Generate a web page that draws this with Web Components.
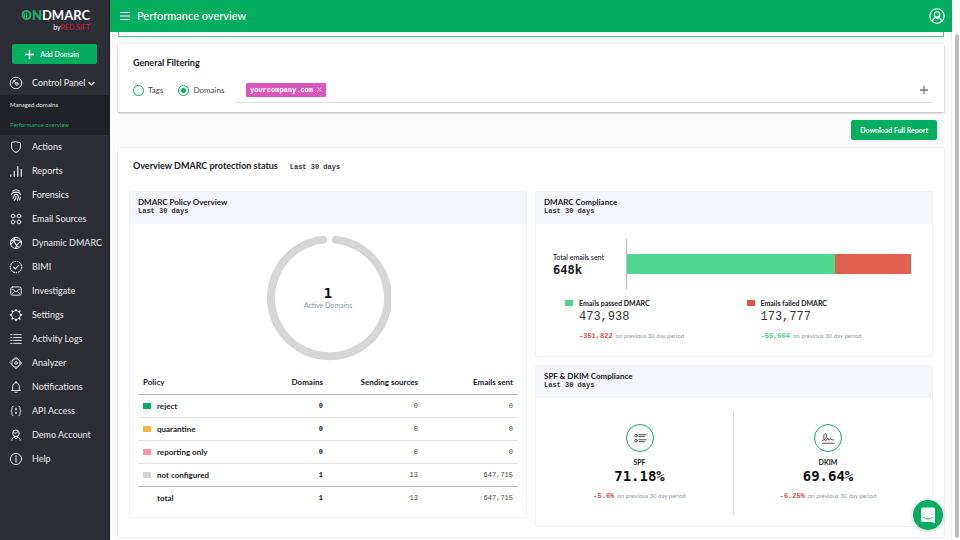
<!DOCTYPE html>
<html lang="en">
<head>
<meta charset="utf-8">
<meta name="viewport" content="width=device-width, initial-scale=1">
<title>OnDMARC – Performance overview</title>
<style>
:root {
  --green: #05ad60;
  --ink: #17181c;
  --panel-head: #f3f5fa;
  --line: #f0f1f4;
  --mono: "Liberation Mono", "Courier New", monospace;
  --mono-strong: "DejaVu Sans Mono", "Liberation Mono", monospace;
}
html, body { height: 100%; margin: 0; }
body { font-family: Lato, "Open Sans", sans-serif; font-size: 8px; line-height: 12px; color: var(--ink); background: #fafafa; overflow: hidden; }
</style>
</head>
<body>
<od-app>
  <od-sidebar slot="side">
    <od-nav-item icon="gauge" expandable>Control Panel</od-nav-item>
    <od-subnav>
      <od-subnav-item>Managed domains</od-subnav-item>
      <od-subnav-item current>Performance overview</od-subnav-item>
    </od-subnav>
    <od-nav-item icon="shield">Actions</od-nav-item>
    <od-nav-item icon="bars">Reports</od-nav-item>
    <od-nav-item icon="print">Forensics</od-nav-item>
    <od-nav-item icon="dots">Email Sources</od-nav-item>
    <od-nav-item icon="aperture">Dynamic DMARC</od-nav-item>
    <od-nav-item icon="badge">BIMI</od-nav-item>
    <od-nav-item icon="mail">Investigate</od-nav-item>
    <od-nav-item icon="gear">Settings</od-nav-item>
    <od-nav-item icon="list">Activity Logs</od-nav-item>
    <od-nav-item icon="target">Analyzer</od-nav-item>
    <od-nav-item icon="bell">Notifications</od-nav-item>
    <od-nav-item icon="braces">API Access</od-nav-item>
    <od-nav-item icon="person">Demo Account</od-nav-item>
    <od-nav-item icon="info">Help</od-nav-item>
  </od-sidebar>
  <od-topbar slot="top">Performance overview</od-topbar>
  <od-banner></od-banner>
  <od-filter></od-filter>
  <od-actions><od-button compact>Download Full Report</od-button></od-actions>
  <od-overview>
    <od-panel slot="left" heading="DMARC Policy Overview"><od-policy></od-policy></od-panel>
    <od-panel slot="right" heading="DMARC Compliance"><od-compliance></od-compliance></od-panel>
    <od-panel slot="right" heading="SPF &amp; DKIM Compliance">
      <od-protocols>
        <od-protocol icon="records" value="71.18%" delta="-5.6%">SPF</od-protocol>
        <od-protocol icon="signature" value="69.64%" delta="-6.25%">DKIM</od-protocol>
      </od-protocols>
    </od-panel>
  </od-overview>
</od-app>
<od-chat></od-chat>

<script>
const ICONS = {
  gauge: '<circle cx="8" cy="8" r="6.6"/><circle cx="9" cy="9" r="1.5"/><path d="M8 8 5 5M4.2 8A4 4 0 0 1 8 4.2"/>',
  shield: '<path d="M8 2 13 3.2V8C13 11.2 11 13 8 14.2 5 13 3 11.2 3 8V3.2Z"/>',
  bars: '<path d="M2 12.5V14M6 8.5V14M10 3V14M14 6V14" stroke-width="1.4"/>',
  print: '<path d="M4.400 3.600C6.400 1.800 9.600 1.800 11.600 3.600M2.800 7.600C3.800 3.800 12.200 3.800 13.200 7.600M4.400 11.600C6.400 10.800 4.600 7.200 8 7 11.400 7 11.200 11 9.600 14M8 9.600C8.200 11.600 7.400 13 6 14M13 10.600C12.800 12 12.400 13 12 13.600" stroke-width="1.300"/>',
  dots: '<circle cx="4.6" cy="4.6" r="2.1"/><circle cx="11.4" cy="4.6" r="2.1"/><circle cx="4.6" cy="11.4" r="2.1"/><circle cx="11.4" cy="11.4" r="2.1"/>',
  aperture: '<circle cx="8" cy="8" r="6.4"/><path d="M2.6 5.4C6 3.8 9.6 4.2 13.8 6.2M6 2.2C5.2 5.6 6.6 9 10.6 12.8M13.8 6.4C10.8 8 8.4 10.4 7.6 14.2M2 9.6C3.6 7.8 5 6.4 6.4 4.8" stroke-width="1.3"/>',
  badge: '<circle cx="8" cy="8" r="6.5" stroke-width="1.3" stroke-linecap="butt" stroke-dasharray="2 .8"/><path d="m5.2 8.2 2 2L11 6.2" stroke-width="1.4"/>',
  mail: '<rect x="2" y="3.4" width="12" height="9.4" rx="2"/><path d="m3.6 5.8 4.4 3 4.4-3M3.6 11 6 9M12.4 11 10 9"/>',
  gear: '<circle cx="8" cy="8" r="5"/><path d="M8 1.600V2.600M8 13.400V14.400M1.600 8H2.600M13.400 8H14.400M3.500 3.500 4.200 4.200M11.800 11.800 12.500 12.500M3.500 12.500 4.200 11.800M11.800 4.200 12.500 3.500" stroke-width="1.700"/>',
  list: '<path d="M2 3H3.4M5.4 3H14M2 6.3H3.4M5.4 6.3H14M2 9.6H3.4M5.4 9.6H14M2 13H3.4M5.4 13H14"/>',
  target: '<path d="M8 1.200 14.800 8 8 14.800 1.200 8Z" stroke-width=".7"/><circle cx="8" cy="8" r="4.800"/><circle cx="8" cy="8" r="1.500"/>',
  bell: '<path d="M3 12H13M4.2 12V7.6C4.2 4.8 6 3.2 8 3.2S11.8 4.8 11.8 7.6V12M8 1.4V3M6.6 14H9.4"/>',
  braces: '<path d="M4.6 2.6C3 2.6 3.4 4 3.4 5.6 3.4 7 3 8 2 8 3 8 3.4 9 3.4 10.4 3.4 12 3 13.4 4.6 13.4M11.4 2.6C13 2.6 12.6 4 12.6 5.6 12.6 7 13 8 14 8 13 8 12.6 9 12.6 10.4 12.6 12 13 13.4 11.4 13.4"/><path d="M8 5.2V6.6M8 9.4V10.8" stroke-width="1.6"/>',
  person: '<circle cx="8" cy="6" r="3.8"/><path d="M5 5.4C7 6.4 9.2 6 10 4.2M3.2 14C3.4 11.6 4.8 10.4 6.2 10.4L8 12.6 9.8 10.4C11.2 10.4 12.6 11.6 12.8 14M6.4 9.4 6 10.6M9.6 9.4 10 10.6"/>',
  info: '<circle cx="8" cy="8" r="6.4"/><path d="M8 7V11.4M8 4.4V5.8" stroke-width="1.3"/>',
  records: '<circle cx="3.4" cy="5.2" r="1.5"/><circle cx="3.4" cy="11" r="1.5"/><path d="M6.8 4.2H15M6.8 6.4H13M6.8 10H15M6.8 12.2H13"/>',
  signature: '<path d="M1.4 14H15M1.6 10.8C4.6 10.6 6.6 7.6 6.4 4.8 6.2 2.4 3.4 2.6 3.2 5.2 3 8 3.6 11.4 5.6 11 7 10.6 7.2 7.8 8 7.8 8.8 8 8 10.8 9.2 10.6 10.2 10.2 10.2 8.6 11 8.8 11.8 9 11.4 10.6 14.4 10.2"/>',
  user: '<circle cx="8" cy="8" r="7.2"/><circle cx="8" cy="6.4" r="2.7"/><path d="M3.4 13.2C3.8 10.8 5.4 9.8 6.2 9.4 7.2 10.4 8.8 10.4 9.8 9.4 10.8 9.8 12.2 10.8 12.6 13.2"/>'
};
const icon = (name, size) => `<svg width="${size}" height="${size}" viewBox="0 0 16 16" fill="none" stroke="currentColor" stroke-width="1.1" stroke-linecap="round" stroke-linejoin="round" aria-hidden="true">${ICONS[name] || ''}</svg>`;

const RESET = '*{box-sizing:border-box}button,input{font:inherit;color:inherit;background:none;border:0;padding:0;margin:0}a{color:inherit;text-decoration:none}svg{display:block;flex:none}';

function define(tag, css, html) {
  customElements.define(tag, class extends HTMLElement {
    constructor() {
      super();
      const body = typeof html === 'function' ? html(this) : html;
      this.attachShadow({ mode: 'open' }).innerHTML = `<style>${RESET}${css}</style>${body}`;
    }
  });
}

define('od-app', `
  :host { display: flex; height: 100vh; }
  ::slotted([slot=side]) { flex: none; }
  .page { flex: 1; min-width: 0; display: flex; flex-direction: column; }
  main { flex: 1; min-height: 0; overflow: hidden; padding: 0 7px; border-left: 1px solid #fff; border-right: 1px solid #f0f0f0; }
  .track { flex: none; width: 8px; background: #fff; padding: 34px 1px 2px 3px; }
  .thumb { height: 100%; background: #bdbdbd; border-radius: 2px; }
`, `<slot name="side"></slot><div class="page"><slot name="top"></slot><main><slot></slot></main></div><div class="track"><div class="thumb"></div></div>`);

define('od-sidebar', `
  :host { display: block; box-sizing: border-box; width: 110px; background: #2d2e35; color: #e9eaec; border-right: 1px solid #1d1e23; overflow: hidden; }
  .logo { display: flex; flex-direction: column; align-items: flex-end; padding: 7px 19px 0 0; height: 44px; }
  .word { font-size: 13px; line-height: 16px; font-weight: 700; color: #fff; display: flex; align-items: center; }
  .word b { color: #16b56b; }
  .o { position: relative; }
  .o svg { position: absolute; left: 2px; top: 5px; }
  .by { font-size: 7px; line-height: 9px; color: #fff; }
  .by span { color: #d0202e; }
  .add { padding: 0 12px 7px; }
  od-button { width: 100%; }
`, `<div class="logo"><div class="word"><b><span class="o">O<svg width="7" height="7" viewBox="0 0 7 7"><path d="M3.5.5v6M1.5 1.5v4" stroke="#16b56b" stroke-width="1.4"/></svg></span>N</b>DMARC</div><div class="by">by<span>RED SIFT</span></div></div>
<div class="add"><od-button plus>Add Domain</od-button></div><nav><slot></slot></nav>`);

define('od-button', `
  :host { display: flex; }
  button { flex: 1; height: 20px; display: flex; align-items: center; justify-content: center; gap: 6px; padding: 0 9px; border-radius: 2px; background: var(--green); color: #fff; font-size: 7px; font-weight: 700; line-height: 12px; }
  :host([plus]) button { font-weight: 600; padding-right: 14px; }
`, el => `<button type="button">${el.hasAttribute('plus') ? '<svg width="9" height="9" viewBox="0 0 9 9" stroke="#fff" stroke-width="1.4"><path d="M4.5 0v9M0 4.5h9"/></svg>' : ''}<span><slot></slot></span></button>`);

define('od-nav-item', `
  :host { display: block; font-size: 9px; line-height: 12px; }
  .row { width: 100%; height: 24px; display: flex; align-items: center; gap: 9px; padding: 0 9px; text-align: left; white-space: nowrap; }
  .chev { margin-left: -6px; }
`, el => {
  const inner = icon(el.getAttribute('icon'), 14) + '<span><slot></slot></span>';
  return el.hasAttribute('expandable')
    ? `<button type="button" class="row" aria-expanded="true">${inner}<svg class="chev" width="7" height="7" viewBox="0 0 7 7" fill="none" stroke="currentColor" stroke-width="1.2"><path d="m.5 2 3 3 3-3"/></svg></button>`
    : `<a class="row" href="#">${inner}</a>`;
});
define('od-subnav', `:host { display: block; background: #212227; }`, '<slot></slot>');
define('od-subnav-item', `
  :host { display: block; font-size: 6px; line-height: 12px; }
  a { display: flex; align-items: center; height: 20px; padding: 0 10px; white-space: nowrap; }
  :host([current]) a { color: #16b56b; }
`, '<a href="#"><span><slot></slot></span></a>');

define('od-topbar', `
  :host { display: block; background: var(--green); color: #fff; }
  header { display: flex; align-items: center; gap: 7px; height: 32px; padding: 0 7px 0 10px; }
  h1 { flex: 1; margin: 0; font-size: 11px; line-height: 16px; font-weight: 500; }
  button { display: flex; }
`, `<header><button type="button" aria-label="Toggle menu"><svg width="10" height="10" viewBox="0 0 10 10" stroke="#fff" stroke-width="1"><path d="M0 1.5h10M0 5h10M0 8.5h10"/></svg></button><h1><slot></slot></h1><button type="button" aria-label="Account">${icon('user', 16)}</button></header>`);

define('od-banner', `:host { display: block; box-sizing: border-box; height: 5px; background: #fff; border: 1px solid #3fbf94; border-top: 0; }`, '');

define('od-filter', `
  :host { display: block; margin-top: 7px; background: #fff; padding: 13px 11px 9px 15px; box-shadow: 0 1px 2px rgba(0,0,0,.28); }
  h2 { margin: 0; font-size: 9px; line-height: 12px; font-weight: 700; }
  form { display: flex; margin-top: 8px; }
  fieldset { border: 0; margin: 0; padding: 0; display: flex; align-items: center; gap: 15px; width: 103px; flex: none; }
  label { display: flex; align-items: center; gap: 4px; color: #444; }
  input[type=radio] { appearance: none; width: 11px; height: 11px; border: 1px solid var(--green); border-radius: 50%; outline: 0; }
  input[type=radio]:checked { background: radial-gradient(circle, var(--green) 2px, #fff 3px); }
  .field { flex: 1; display: flex; align-items: center; height: 26px; padding: 0 5px 0 10px; border-bottom: 1px solid #dedede; }
  .chip { display: flex; align-items: center; gap: 4px; height: 14px; padding: 0 4px; border-radius: 1px; background: #d957bd; color: #fff; font: 700 7px/12px var(--mono); }
  .field input { flex: 1; min-width: 0; outline: 0; }
  button { display: flex; }
`, `<h2>General Filtering</h2><form><fieldset aria-label="Filter by"><label><input type="radio" name="by">Tags</label><label><input type="radio" name="by" checked>Domains</label></fieldset>
<div class="field"><span class="chip">yourcompany.com<button type="button" aria-label="Remove yourcompany.com"><svg width="5" height="5" viewBox="0 0 5 5" stroke="#fff" stroke-width=".8"><path d="m.5.5 4 4M4.5.5l-4 4"/></svg></button></span><input type="text" aria-label="Domains"><button type="button" aria-label="Add domain"><svg width="8" height="8" viewBox="0 0 8 8" stroke="#777" stroke-width="1.3"><path d="M4 0v8M0 4h8"/></svg></button></div></form>`);

define('od-actions', `:host { display: flex; justify-content: flex-end; padding: 8px 7px; }`, '<slot></slot>');

define('od-overview', `
  :host { display: block; background: #fff; padding: 12px 11px 10px; box-shadow: 0 0 1px rgba(0,0,0,.25); }
  header { display: flex; align-items: baseline; gap: 12px; padding: 0 4px; margin-bottom: 18px; }
  h2 { margin: 0; font-size: 9px; line-height: 12px; font-weight: 700; }
  header span { font: 700 7px/12px var(--mono); color: #333; }
  .grid { display: grid; grid-template-columns: 1fr 1fr; gap: 8px; align-items: start; }
  .col { display: grid; gap: 8px; }
`, `<header><h2>Overview DMARC protection status</h2><span>Last 30 days</span></header><div class="grid"><div class="col"><slot name="left"></slot></div><div class="col"><slot name="right"></slot></div></div>`);

define('od-panel', `
  :host { display: block; border: 1px solid var(--line); border-radius: 2px; }
  header { background: var(--panel-head); height: 32px; padding: 5px 8px 0; }
  h3 { margin: 0; font-size: 8px; line-height: 10px; font-weight: 700; }
  p { margin: 0; font: 700 7px/8px var(--mono); color: #333; }
`, el => `<header><h3>${el.getAttribute('heading').replace('&', '&amp;')}</h3><p>Last 30 days</p></header><slot></slot>`);

const ROWS = [['reject', '#05ad60', 0, 0, '0'], ['quarantine', '#f8b43c', 0, 0, '0'], ['reporting only', '#f49c9c', 0, 0, '0'], ['not configured', '#d3d3d3', 1, 13, '647,715'], ['total', 'transparent', 1, 13, '647,715']];
define('od-policy', `
  :host { display: block; padding: 11px 8px 8px; }
  .donut { display: grid; place-items: center; margin-bottom: 10px; }
  .donut > * { grid-area: 1 / 1; }
  .mid { text-align: center; color: #7c93a6; font-size: 7px; line-height: 9px; }
  .mid b { display: block; font: 700 14px/15px var(--mono-strong); color: #111; }
  table { width: 100%; table-layout: fixed; border-collapse: collapse; }
  th, td { height: 23px; padding: 0 5px; text-align: right; font-size: 8px; line-height: 12px; font-weight: 700; border-bottom: 1px solid #e2e2e2; white-space: nowrap; }
  th:first-child { text-align: left; }
  td { font: 400 7px/12px var(--mono); color: #444; }
  td.n { font-weight: 700; color: #111; }
  thead th, tbody tr:nth-child(4) > * { border-bottom-color: #b5b5b5; }
  tbody tr:last-child > * { border-bottom: 0; }
  i { display: inline-block; width: 8px; height: 6px; margin-right: 6px; }
`, `<div class="donut"><svg width="126" height="126" viewBox="-63 -63 126 126"><path d="M8-58.3A58.5 58.5 0 1 1-5-58.3" fill="none" stroke="#d6d6d6" stroke-width="8" stroke-linecap="round"/></svg><div class="mid"><b>1</b>Active Domains</div></div>
<table><thead><tr><th scope="col">Policy</th><th scope="col">Domains</th><th scope="col">Sending sources</th><th scope="col">Emails sent</th></tr></thead><tbody>${ROWS.map(r => `<tr><th scope="row"><i style="background:${r[1]}"></i>${r[0]}</th><td class="n">${r[2]}</td><td>${r[3]}</td><td>${r[4]}</td></tr>`).join('')}</tbody></table>`);

define('od-delta', `
  :host { display: block; font-size: 6px; line-height: 10px; color: #8d97a5; white-space: nowrap; }
  b { font: 700 7px/10px var(--mono); color: #e2463f; margin-right: 3px; }
  :host([good]) b { color: #2fcf7c; }
`, '<b><slot></slot></b>on previous 30 day period');

define('od-compliance', `
  :host { display: block; padding: 15px 0; }
  .chart { display: grid; grid-template-columns: 73px 1fr; align-items: center; padding: 0 21px 0 17px; }
  .total { font-size: 7px; line-height: 12px; font-weight: 500; }
  .total b { display: block; font: 700 12px/15px var(--mono-strong); }
  .axis { border-left: 1px solid #b9b9b9; padding: 15px 0; }
  .bar { display: flex; height: 20px; }
  .pass { flex: 473938; background: #52d78f; }
  .fail { flex: 173777; background: #e0614d; }
  .legend { display: grid; grid-template-columns: 1fr 1fr; padding: 8px 4px 0 29px; }
  .item { display: grid; grid-template-columns: 8px 1fr; column-gap: 6px; align-items: center; }
  i { height: 6px; background: #45d485; }
  i.bad { background: #e25440; }
  .name { font-size: 7px; font-weight: 700; line-height: 12px; }
  .num { grid-column: 2; font: 400 12px/16px var(--mono); color: #333; }
  od-delta { grid-column: 2; margin-top: 6px; }
`, `<div class="chart"><div class="total">Total emails sent<b>648k</b></div><div class="axis"><div class="bar"><div class="pass"></div><div class="fail"></div></div></div></div>
<div class="legend"><div class="item"><i></i><span class="name">Emails passed DMARC</span><span class="num">473,938</span><od-delta>-351,822</od-delta></div><div class="item"><i class="bad"></i><span class="name">Emails failed DMARC</span><span class="num">173,777</span><od-delta good>-55,664</od-delta></div></div>`);

define('od-protocols', `
  :host { display: grid; grid-template-columns: 1fr 1fr; padding: 12px 10px 11px; }
  ::slotted(:first-child) { border-right: 1px solid #dcdcdc; }
`, '<slot></slot>');

define('od-protocol', `
  :host { display: flex; flex-direction: column; align-items: center; padding: 14px 0; }
  .ring { width: 28px; height: 28px; border: 1px solid #14ab6a; border-radius: 50%; display: grid; place-items: center; color: #444; }
  .name { font-size: 7px; font-weight: 700; line-height: 12px; margin-top: 4px; }
  .value { font: 700 14px/16px var(--mono-strong); color: #111; }
  od-delta { margin-top: 7px; }
`, el => `<div class="ring">${icon(el.getAttribute('icon'), 14)}</div><span class="name"><slot></slot></span><span class="value">${el.getAttribute('value')}</span><od-delta>${el.getAttribute('delta')}</od-delta>`);

define('od-chat', `
  :host { position: fixed; right: 17px; bottom: 10px; }
  button { width: 30px; height: 30px; border-radius: 50%; background: var(--green); display: grid; place-items: center; box-shadow: 0 1px 5px rgba(0,0,0,.2); }
`, '<button type="button" aria-label="Open chat"><svg width="16" height="17" viewBox="0 0 16 17"><path d="M2.5.5h11A1.5 1.5 0 0 1 15 2v14.5l-3-1.5H2.5A1.5 1.5 0 0 1 1 13.5V2A1.5 1.5 0 0 1 2.5.5Z" fill="#fff"/><path d="M3.5 10.5c2.6 2 6.4 2 9 0" fill="none" stroke="#05ad60" stroke-width="1" stroke-linecap="round"/></svg></button>');
</script>
</body>
</html>
